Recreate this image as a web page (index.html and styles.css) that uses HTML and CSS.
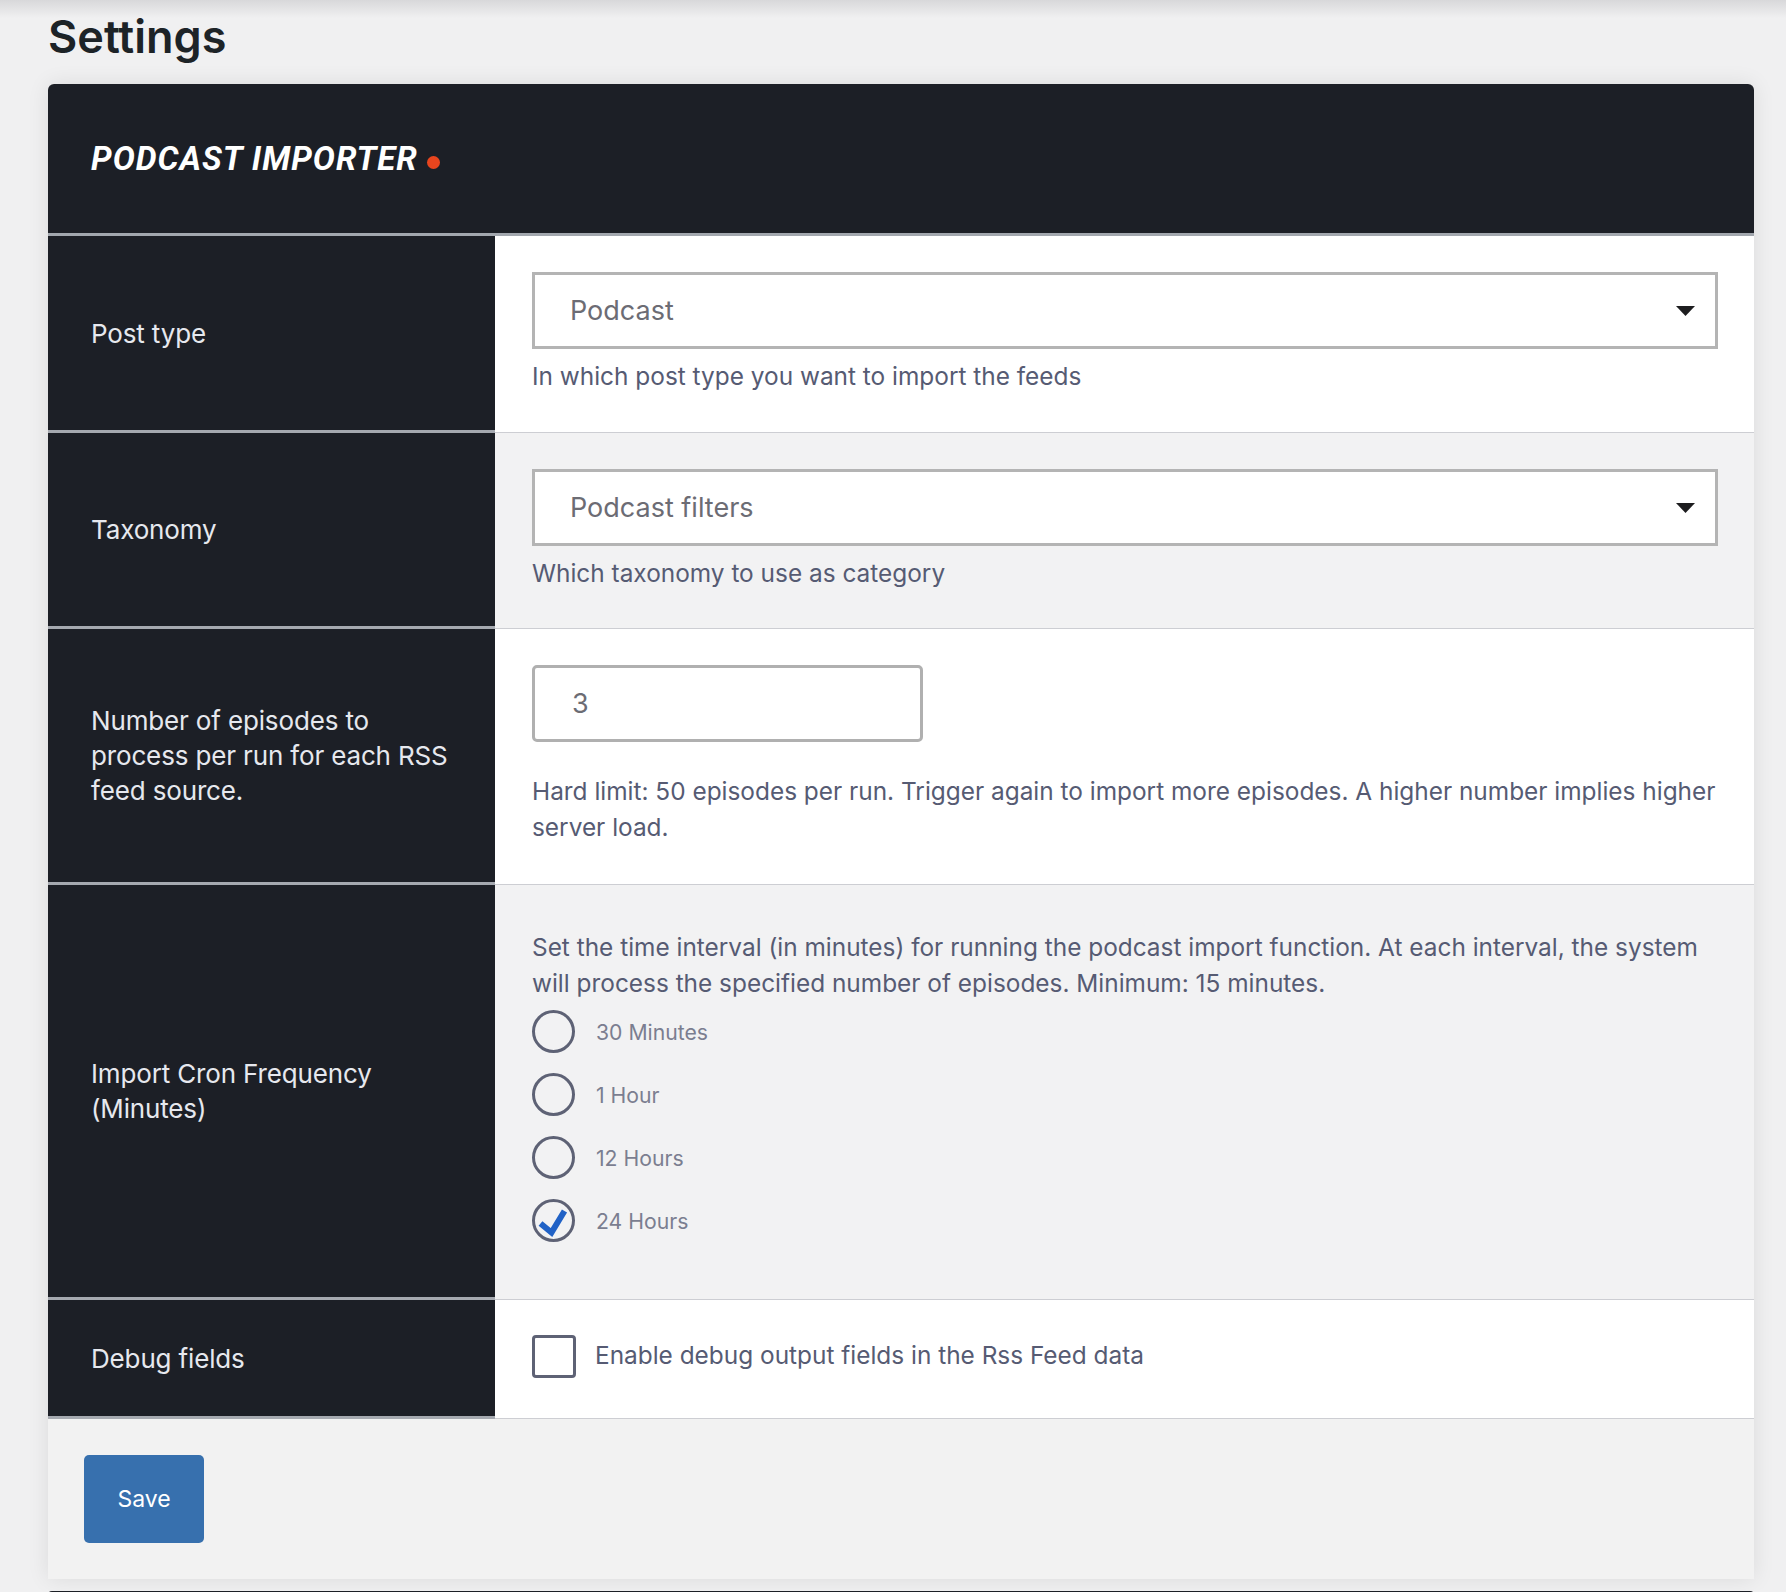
FILE: index.html
```html
<!DOCTYPE html>
<html lang="en">
<head>
<meta charset="UTF-8">
<meta name="viewport" content="width=device-width, initial-scale=1.0">
<title>Settings</title>
<link rel="stylesheet" href="styles.css">
</head>
<body>

<h1 class="page-title">Settings</h1>

<div class="card">
  <div class="card-header">
    <span class="brand">PODCAST IMPORTER</span><span class="brand-dot"></span>
  </div>

  <div class="row">
    <div class="row-label">Post type</div>
    <div class="row-field">
      <div class="select-box">
        <span>Podcast</span>
        <svg class="select-arrow" width="19" height="10" viewBox="0 0 19 10"><path d="M0 0h19L9.5 10z" fill="#1d1d1f"/></svg>
      </div>
      <p class="desc">In which post type you want to import the feeds</p>
    </div>
  </div>

  <div class="row row-alt">
    <div class="row-label">Taxonomy</div>
    <div class="row-field row-field-tax">
      <div class="select-box">
        <span>Podcast filters</span>
        <svg class="select-arrow" width="19" height="10" viewBox="0 0 19 10"><path d="M0 0h19L9.5 10z" fill="#1d1d1f"/></svg>
      </div>
      <p class="desc">Which taxonomy to use as category</p>
    </div>
  </div>

  <div class="row">
    <div class="row-label">Number of episodes to process per run for each RSS feed source.</div>
    <div class="row-field">
      <div class="number-box">3</div>
      <p class="desc desc-spaced">Hard limit: 50 episodes per run. Trigger again to import more episodes. A higher number implies higher server load.</p>
    </div>
  </div>

  <div class="row row-alt">
    <div class="row-label">Import Cron Frequency (Minutes)</div>
    <div class="row-field row-field-cron">
      <p class="desc">Set the time interval (in minutes) for running the podcast import function. At each interval, the system will process the specified number of episodes. Minimum: 15 minutes.</p>
      <div class="radio-list">
        <div class="radio-item"><span class="radio"></span><span class="radio-label">30 Minutes</span></div>
        <div class="radio-item"><span class="radio"></span><span class="radio-label">1 Hour</span></div>
        <div class="radio-item"><span class="radio"></span><span class="radio-label">12 Hours</span></div>
        <div class="radio-item">
          <span class="radio">
            <svg width="43" height="43" viewBox="0 0 43 43"><polyline points="8.5,24.5 19.5,33.5 32.5,12" fill="none" stroke="#2162c6" stroke-width="6" stroke-linejoin="miter"/></svg>
          </span>
          <span class="radio-label">24 Hours</span>
        </div>
      </div>
    </div>
  </div>

  <div class="row">
    <div class="row-label">Debug fields</div>
    <div class="row-field row-field-debug">
      <span class="checkbox"></span>
      <span class="check-label">Enable debug output fields in the Rss Feed data</span>
    </div>
  </div>

  <div class="card-footer">
    <button type="button" class="save-btn">Save</button>
  </div>
</div>

<div class="card-next"></div>

</body>
</html>
```

FILE: styles.css
```css
body {
  margin: 0;
  padding: 14px 32px 0 48px;
  font-family: Inter, "Noto Sans", Arial, sans-serif;
  background: #f0f0f1 linear-gradient(to bottom, #d8d8da 0, #f0f0f1 18px) no-repeat;
  color: #1d2327;
  height: 1578px;
  overflow: hidden;
}
.page-title {
  margin: 0 0 25px 0;
  font-size: 45px;
  line-height: 45px;
  font-weight: 600;
  color: #1d2327;
}
.card {
  border-radius: 6px 6px 0 0;
  overflow: hidden;
  box-shadow: 0 0 22px rgba(0, 0, 0, 0.09);
  background: #f2f2f2;
}
.card-header {
  display: flex;
  align-items: center;
  height: 152px;
  box-sizing: border-box;
  padding: 0 43px;
  background-color: #1c1f26;
  border-bottom: 3px solid #a2a7ae;
}
.brand {
  font-family: Roboto, Arial, sans-serif;
  font-style: italic;
  font-weight: 700;
  font-size: 33px;
  line-height: 33px;
  color: #fff;
  letter-spacing: 1px;
}
.brand-dot {
  flex: none;
  width: 13px;
  height: 13px;
  border-radius: 50%;
  background-color: #e8451e;
  margin: 8px 0 0 9px;
}
.row {
  display: flex;
  background-color: #fff;
}
.row-alt {
  background-color: #f2f2f3;
}
.row-label {
  flex: none;
  width: 447px;
  box-sizing: border-box;
  padding: 0 40px 0 43px;
  background-color: #1c1f26;
  color: #e6e8ee;
  border-bottom: 3px solid #a5a9b0;
  display: flex;
  align-items: center;
  font-size: 26px;
  line-height: 35px;
  letter-spacing: -0.15px;
}
.row-field {
  flex: 1;
  padding: 36px 36px 38px 37px;
  border-bottom: 1px solid #cdced3;
}
.row-field-tax {
  padding-bottom: 36px;
}
.select-box {
  height: 71px;
  border: 3px solid #b4b4b4;
  background-color: #fff;
  display: flex;
  align-items: center;
  justify-content: space-between;
  padding: 0 20px 0 35px;
  font-size: 27px;
  color: #6c6c74;
}
.number-box {
  width: 385px;
  height: 71px;
  border: 3px solid #b0b0b0;
  border-radius: 5px;
  background-color: #fff;
  display: flex;
  align-items: center;
  text-indent: 37px;
  font-size: 27px;
  color: #6c6c74;
}
.desc {
  margin: 9px 0 0 0;
  font-size: 24.4px;
  line-height: 36.4px;
  color: #565b73;
}
.desc-spaced {
  margin-top: 31px;
}
.row-field-cron {
  padding-top: 44px;
  padding-bottom: 37px;
}
.row-field-cron .desc {
  margin-top: 0;
}
.radio-list {
  margin-top: 9px;
}
.radio-item {
  display: flex;
  align-items: center;
  height: 43px;
  margin-bottom: 20px;
}
.radio {
  flex: none;
  width: 37px;
  height: 37px;
  border: 3px solid #5e6275;
  border-radius: 50%;
  position: relative;
}
.radio svg {
  position: absolute;
  left: -3px;
  top: -3px;
}
.radio-label {
  margin-left: 21px;
  font-size: 21.2px;
  color: #7b7e90;
}
.row-field-debug {
  display: flex;
  align-items: center;
  padding-top: 35px;
  padding-bottom: 40px;
}
.checkbox {
  flex: none;
  width: 38px;
  height: 37px;
  border: 3px solid #5e6275;
  border-radius: 4px;
  background-color: #fff;
}
.check-label {
  margin-left: 19px;
  font-size: 24.4px;
  color: #565b73;
  margin-top: -4px;
}
.card-footer {
  padding: 36px;
  background-color: #f2f2f2;
}
.save-btn {
  width: 120px;
  height: 88px;
  border: none;
  border-radius: 5px;
  background-color: #3770ae;
  color: #fff;
  font-family: Inter, Arial, sans-serif;
  font-size: 23px;
  cursor: pointer;
  display: block;
}
.card-next {
  margin-top: 12px;
  height: 20px;
  background-color: #1c1f26;
  border-radius: 4px 4px 0 0;
}
```
